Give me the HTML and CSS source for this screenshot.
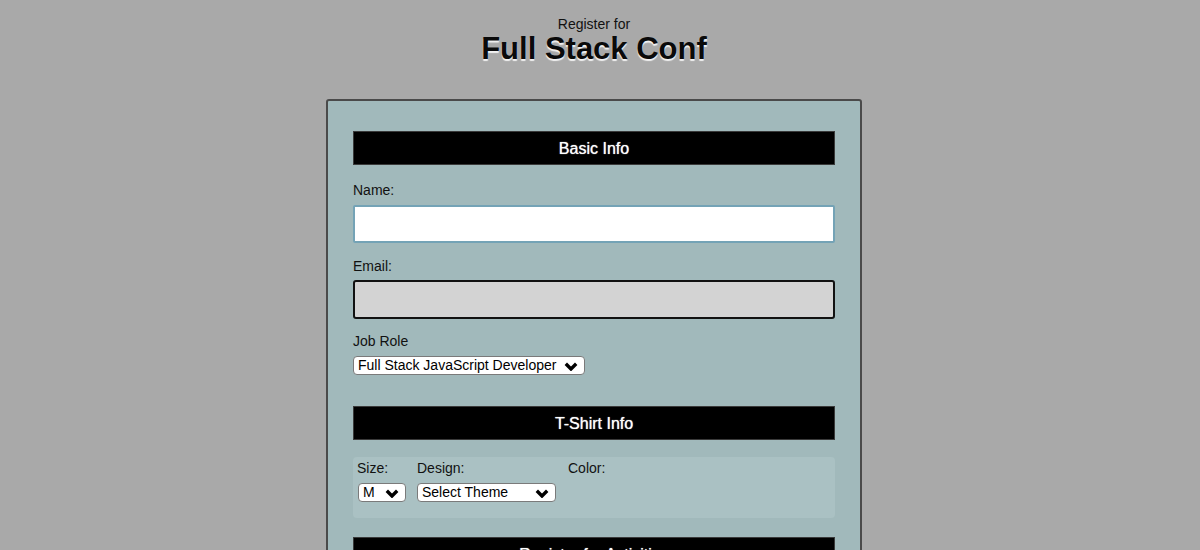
FILE: index.html
```html
<!DOCTYPE html>
<html lang="en">
<head>
<meta charset="utf-8">
<title>Full Stack Conf Registration</title>
<link rel="stylesheet" href="styles.css">
</head>
<body>
<header class="page-header">
  <p class="kicker">Register for</p>
  <h1 class="title">Full Stack Conf</h1>
</header>
<form class="reg-form">
  <div class="section-bar">Basic Info</div>
  <label class="field-label label-name" for="name">Name:</label>
  <input class="text-input input-name" id="name" type="text">
  <label class="field-label label-email" for="mail">Email:</label>
  <input class="text-input input-email" id="mail" type="email">
  <label class="field-label label-job" for="title">Job Role</label>
  <span class="select-wrap select-job">
    <select id="title" class="select">
      <option>Full Stack JavaScript Developer</option>
    </select>
    <svg class="chev" viewBox="0 0 14 9" width="14" height="9"><polyline points="1.8,1.8 7,7 12.2,1.8" fill="none" stroke="#000" stroke-width="3.4"/></svg>
  </span>

  <div class="section-bar bar-shirt">T-Shirt Info</div>
  <div class="shirt-box">
    <div class="col col-size">
      <label class="field-label" for="size">Size:</label>
      <span class="select-wrap select-size">
        <select id="size" class="select"><option>M</option></select>
        <svg class="chev" viewBox="0 0 14 9" width="14" height="9"><polyline points="1.8,1.8 7,7 12.2,1.8" fill="none" stroke="#000" stroke-width="3.4"/></svg>
      </span>
    </div>
    <div class="col col-design">
      <label class="field-label" for="design">Design:</label>
      <span class="select-wrap select-design">
        <select id="design" class="select"><option>Select Theme</option></select>
        <svg class="chev" viewBox="0 0 14 9" width="14" height="9"><polyline points="1.8,1.8 7,7 12.2,1.8" fill="none" stroke="#000" stroke-width="3.4"/></svg>
      </span>
    </div>
    <div class="col col-color">
      <label class="field-label">Color:</label>
    </div>
  </div>

  <div class="section-bar bar-activities">Register for Activities</div>
  <div class="activities-spacer"></div>
</form>
</body>
</html>
```

FILE: styles.css
```css
html {
  overflow: hidden;
}

body {
  margin: 0;
  padding-right: 12px;
  background: #a9a9a9;
  font-family: "Liberation Sans", Arial, Helvetica, sans-serif;
  color: #111;
}

.page-header {
  padding-top: 17px;
  text-align: center;
}

.kicker {
  margin: 0;
  font-size: 14px;
  line-height: 15px;
  color: #111;
}

.title {
  margin: -1px 0 0;
  font-size: 31px;
  line-height: 36px;
  font-weight: bold;
  color: #0a0a0a;
  text-shadow: 0 2px 1px rgba(255, 255, 255, 0.85);
}

.reg-form {
  width: 536px;
  box-sizing: border-box;
  margin: 32px auto 0;
  padding: 30px 25px 40px;
  background: #a1b9bb;
  border: 2px solid #4a4a4a;
  border-radius: 3px;
  display: flex;
  flex-direction: column;
  align-items: flex-start;
}

.section-bar {
  align-self: stretch;
  height: 34px;
  box-sizing: border-box;
  padding-top: 2px;
  background: #000;
  border: 1px solid #3a3a3a;
  color: #fff;
  font-size: 16px;
  line-height: 30px;
  text-align: center;
  text-shadow: 0 0 1px rgba(255, 255, 255, 0.9);
}

.field-label {
  display: block;
  font-size: 14px;
  line-height: 16px;
  color: #111;
}

.label-name { margin-top: 17px; }
.label-email { margin-top: 15px; }
.label-job { margin-top: 14px; }

.text-input {
  align-self: stretch;
  box-sizing: border-box;
  font: 14px "Liberation Sans", Arial, sans-serif;
  padding: 0 8px;
  outline: none;
}

.input-name {
  margin-top: 7px;
  height: 38px;
  background: #fff;
  border: 2px solid #74a3b6;
  border-radius: 2px;
}

.input-email {
  margin-top: 6px;
  height: 39px;
  background: #d3d3d3;
  border: 2px solid #111;
  border-radius: 3px;
}

.select-wrap {
  position: relative;
  display: inline-block;
}

.select {
  -webkit-appearance: none;
  appearance: none;
  display: block;
  box-sizing: border-box;
  height: 19px;
  margin: 0;
  padding: 0 0 0 4px;
  background: #fff;
  border: 1px solid #7a7a7a;
  border-radius: 4px;
  font: 14px/17px "Liberation Sans", Arial, sans-serif;
  color: #000;
}

.chev {
  position: absolute;
  right: 7px;
  top: 6px;
  pointer-events: none;
}

.select-job {
  margin-top: 7px;
}

.select-job .select {
  width: 232px;
}

.bar-shirt {
  margin-top: 31px;
}

.shirt-box {
  align-self: stretch;
  margin-top: 17px;
  padding: 3px 4px 16px;
  background: #aac1c3;
  border-radius: 4px;
  display: flex;
  align-items: flex-start;
}

.col {
  display: flex;
  flex-direction: column;
  align-items: flex-start;
}

.col .select-wrap {
  margin-top: 7px;
}

.col-size {
  margin-right: 11px;
}

.select-size {
  margin-left: 1px;
}

.select-size .select {
  width: 48px;
}

.col-design {
  margin-right: 12px;
}

.select-design .select {
  width: 139px;
}

.bar-activities {
  margin-top: 19px;
}

.activities-spacer {
  height: 120px;
}
```
